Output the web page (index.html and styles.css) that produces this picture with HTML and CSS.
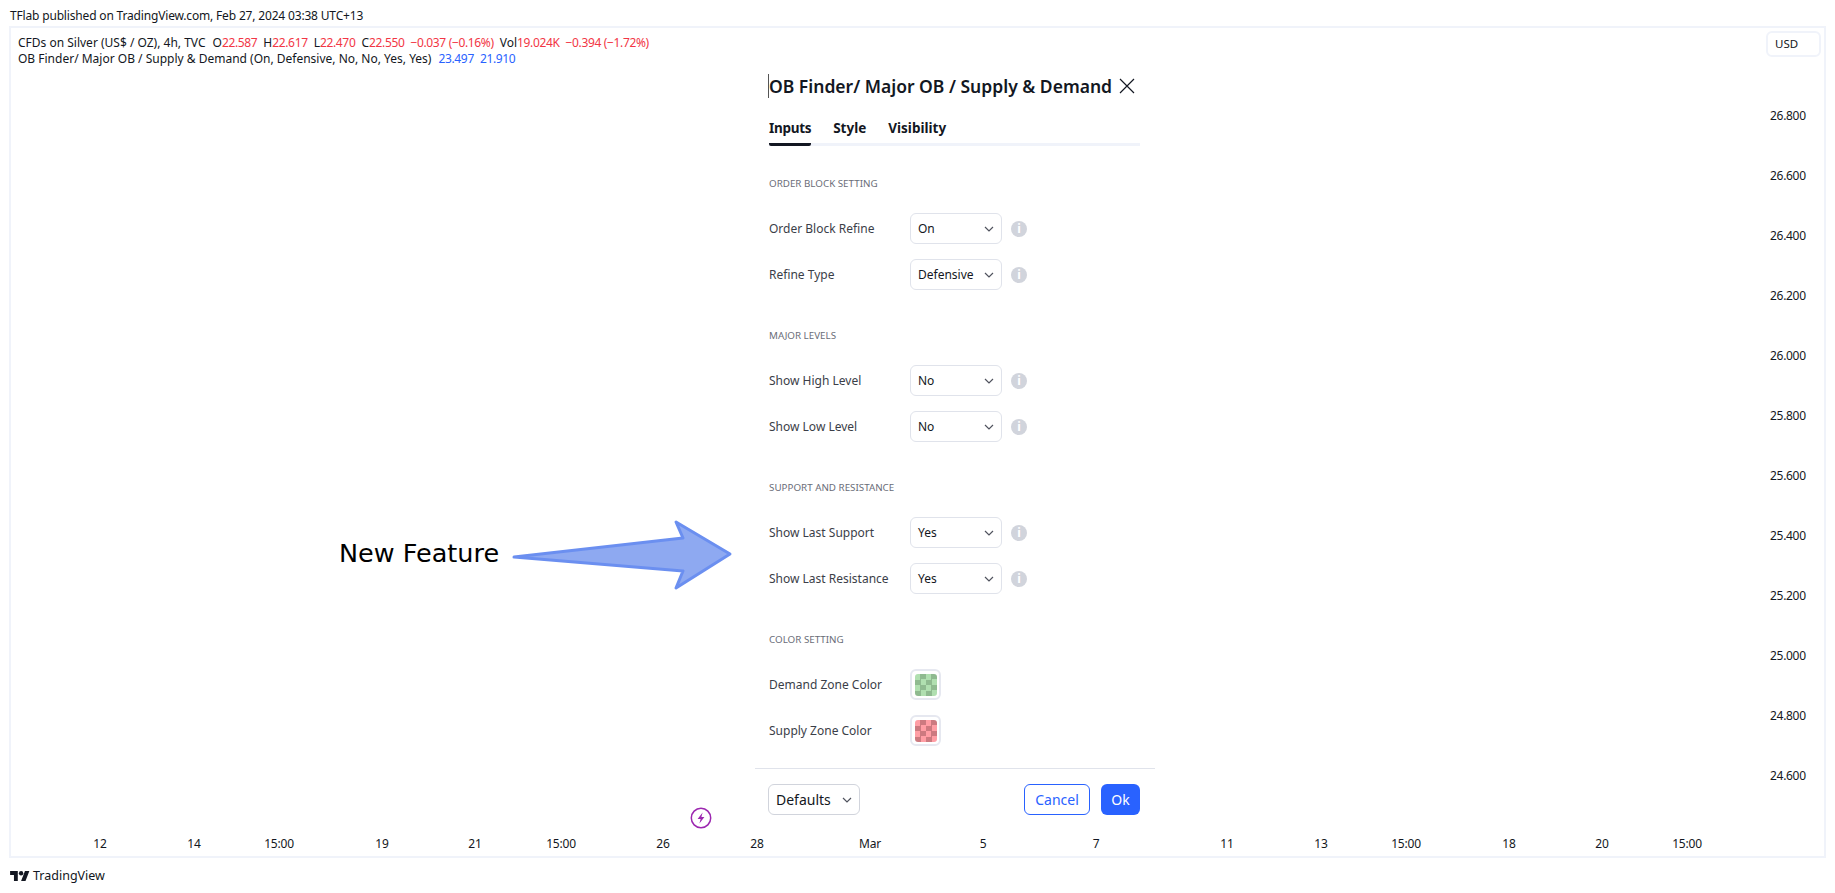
FILE: index.html
```html
<!DOCTYPE html>
<html lang="en">
<head>
    <meta charset="UTF-8">
    <title>OB Finder on TradingView</title>
    <link rel="stylesheet" href="styles.css">
</head>
<body>
    <div class="published">TFlab published on TradingView.com, Feb 27, 2024 03:38 UTC+13</div>

    <div class="chart">
        <div class="legend">
            <div class="legend-line">
                <span class="legend-name">CFDs on Silver (US$ / OZ), 4h, TVC</span>
                <span>O<b class="down">22.587</b></span>
                <span>H<b class="down">22.617</b></span>
                <span>L<b class="down">22.470</b></span>
                <span>C<b class="down">22.550</b></span>
                <span class="down">−0.037 (−0.16%)</span>
                <span>Vol<b class="down">19.024K</b></span>
                <span class="down">−0.394 (−1.72%)</span>
            </div>
            <div class="legend-line">
                <span class="legend-name">OB Finder/ Major OB / Supply &amp; Demand (On, Defensive, No, No, Yes, Yes)</span>
                <span class="blue">23.497</span>
                <span class="blue">21.910</span>
            </div>
        </div>

        <div class="price-axis">
            <div class="currency">USD</div>
            <div class="prices">
                <span>26.800</span>
                <span>26.600</span>
                <span>26.400</span>
                <span>26.200</span>
                <span>26.000</span>
                <span>25.800</span>
                <span>25.600</span>
                <span>25.400</span>
                <span>25.200</span>
                <span>25.000</span>
                <span>24.800</span>
                <span>24.600</span>
            </div>
        </div>

        <div class="time-axis">
            <span style="left: 91px">12</span>
            <span style="left: 185px">14</span>
            <span style="left: 270px">15:00</span>
            <span style="left: 373px">19</span>
            <span style="left: 466px">21</span>
            <span style="left: 552px">15:00</span>
            <span style="left: 654px">26</span>
            <span style="left: 748px">28</span>
            <span style="left: 861px">Mar</span>
            <span style="left: 974px">5</span>
            <span style="left: 1087px">7</span>
            <span style="left: 1218px">11</span>
            <span style="left: 1312px">13</span>
            <span style="left: 1397px">15:00</span>
            <span style="left: 1500px">18</span>
            <span style="left: 1593px">20</span>
            <span style="left: 1678px">15:00</span>
        </div>

        <svg class="flash" width="22" height="22" viewBox="0 0 22 22">
            <circle cx="11" cy="11" r="9.7" fill="#fff" stroke="#9c27b0" stroke-width="1.5"/>
            <path d="M12.6 5.5 7.6 12h3l-1.2 4.6 5-6.5h-3z" fill="#9c27b0"/>
        </svg>

        <div class="annotation">
            <span class="annotation-text">New Feature</span>
            <svg class="arrow" width="230" height="76" viewBox="0 0 230 76">
                <path d="M4 38 173 19 166 3 220 35 166 69 173 52z" fill="#8ea9f1" stroke="#6b8ff0" stroke-width="3" stroke-linejoin="round"/>
            </svg>
        </div>

        <div class="dialog">
            <div class="dialog-head">
                <h2 class="dialog-title">OB Finder/ Major OB / Supply &amp; Demand</h2>
                <svg class="close" width="16" height="16" viewBox="0 0 16 16">
                    <path d="M1 1l14 14M15 1 1 15" stroke="#131722" stroke-width="1.2" fill="none"/>
                </svg>
            </div>
            <div class="tabs">
                <span class="tab active">Inputs</span>
                <span class="tab">Style</span>
                <span class="tab">Visibility</span>
            </div>

            <div class="section">ORDER BLOCK SETTING</div>
            <div class="row">
                <span class="row-label">Order Block Refine</span>
                <div class="select"><span>On</span><svg class="chev" width="10" height="6" viewBox="0 0 10 6"><path d="M1 1l4 4 4-4" fill="none" stroke="#50535e" stroke-width="1.2"/></svg></div>
                <span class="info">i</span>
            </div>
            <div class="row">
                <span class="row-label">Refine Type</span>
                <div class="select"><span>Defensive</span><svg class="chev" width="10" height="6" viewBox="0 0 10 6"><path d="M1 1l4 4 4-4" fill="none" stroke="#50535e" stroke-width="1.2"/></svg></div>
                <span class="info">i</span>
            </div>

            <div class="section">MAJOR LEVELS</div>
            <div class="row">
                <span class="row-label">Show High Level</span>
                <div class="select"><span>No</span><svg class="chev" width="10" height="6" viewBox="0 0 10 6"><path d="M1 1l4 4 4-4" fill="none" stroke="#50535e" stroke-width="1.2"/></svg></div>
                <span class="info">i</span>
            </div>
            <div class="row">
                <span class="row-label">Show Low Level</span>
                <div class="select"><span>No</span><svg class="chev" width="10" height="6" viewBox="0 0 10 6"><path d="M1 1l4 4 4-4" fill="none" stroke="#50535e" stroke-width="1.2"/></svg></div>
                <span class="info">i</span>
            </div>

            <div class="section">SUPPORT AND RESISTANCE</div>
            <div class="row">
                <span class="row-label">Show Last Support</span>
                <div class="select"><span>Yes</span><svg class="chev" width="10" height="6" viewBox="0 0 10 6"><path d="M1 1l4 4 4-4" fill="none" stroke="#50535e" stroke-width="1.2"/></svg></div>
                <span class="info">i</span>
            </div>
            <div class="row">
                <span class="row-label">Show Last Resistance</span>
                <div class="select"><span>Yes</span><svg class="chev" width="10" height="6" viewBox="0 0 10 6"><path d="M1 1l4 4 4-4" fill="none" stroke="#50535e" stroke-width="1.2"/></svg></div>
                <span class="info">i</span>
            </div>

            <div class="section">COLOR SETTING</div>
            <div class="row">
                <span class="row-label">Demand Zone Color</span>
                <div class="swatch-box"><div class="swatch green"></div></div>
            </div>
            <div class="row">
                <span class="row-label">Supply Zone Color</span>
                <div class="swatch-box"><div class="swatch red"></div></div>
            </div>

            <div class="dialog-foot">
                <div class="select defaults"><span>Defaults</span><svg class="chev" width="10" height="6" viewBox="0 0 10 6"><path d="M1 1l4 4 4-4" fill="none" stroke="#50535e" stroke-width="1.2"/></svg></div>
                <div class="foot-buttons">
                    <button class="btn cancel">Cancel</button>
                    <button class="btn ok">Ok</button>
                </div>
            </div>
        </div>
    </div>

    <div class="brand">
        <svg width="20" height="11" viewBox="0 0 36 20">
            <path d="M14 20H7V9H0V2h14zM28 20h-8l7-18h8z" fill="#131722"/>
            <circle cx="20" cy="6" r="4" fill="#131722"/>
        </svg>
        <span>TradingView</span>
    </div>
</body>
</html>
```

FILE: styles.css
```css
body, html {
    margin: 0;
    padding: 0;
    height: 893px;
    overflow: hidden;
    background-color: white;
    color: #131722;
    font-family: 'Noto Sans', sans-serif;
    font-size: 12px;
}
.published {
    height: 26px;
    padding-left: 10px;
    line-height: 31px;
    font-size: 12px;
    letter-spacing: -0.17px;
}
.chart {
    position: relative;
    box-sizing: border-box;
    width: 1817px;
    height: 832px;
    margin-left: 9px;
    border: 2px solid #f0f3fa;
}

/* legend */
.legend {
    padding: 6px 0 0 7px;
}
.legend-line {
    display: flex;
    gap: 6px;
    height: 16px;
    line-height: 17px;
}
.legend-name {
    margin-right: 1px;
}
.legend b {
    font-weight: normal;
}
.down, .blue {
    letter-spacing: -0.35px;
}
.down {
    color: #f23645;
}
.blue {
    color: #2962ff;
}

/* axes */
.price-axis {
    position: absolute;
    top: 3px;
    right: 3px;
    width: 55px;
}
.currency {
    box-sizing: border-box;
    height: 26px;
    padding-left: 7px;
    line-height: 22px;
    border: 2px solid #f0f3fa;
    border-radius: 6px;
    font-size: 11.5px;
}
.prices {
    display: flex;
    flex-direction: column;
    margin-top: 49px;
    padding-left: 4px;
    letter-spacing: -0.3px;
}
.prices span {
    height: 60px;
    line-height: 20px;
}
.time-axis {
    position: absolute;
    left: -2px;
    right: 0;
    bottom: 2px;
    height: 20px;
    line-height: 20px;
    letter-spacing: -0.2px;
}
.time-axis span {
    position: absolute;
    transform: translateX(-50%);
}
.flash {
    position: absolute;
    left: 679px;
    top: 779px;
}

/* arrow and its label */
.annotation {
    position: absolute;
    left: 328px;
    top: 487px;
    display: flex;
    align-items: center;
    height: 76px;
}
.annotation-text {
    width: 171px;
    font-family: 'DejaVu Sans', sans-serif;
    font-size: 25.5px;
    color: black;
}
.arrow {
    margin-top: 8px;
}

/* settings dialog */
.dialog {
    position: absolute;
    left: 744px;
    top: 30px;
    box-sizing: border-box;
    width: 400px;
    padding: 0 15px 0 14px;
    background-color: white;
}
.dialog-head {
    display: flex;
    align-items: center;
    justify-content: space-between;
    height: 56px;
    padding-right: 5px;
}
.dialog-title {
    margin: 0 0 0 -1px;
    border-left: 1px solid #555;
    font-size: 17.5px;
    font-weight: 600;
    white-space: nowrap;
}
.tabs {
    display: flex;
    gap: 22px;
    height: 29px;
    border-bottom: 3px solid #f0f3fa;
}
.tab {
    font-size: 13.5px;
    font-weight: 700;
    line-height: 28px;
}
.tab.active {
    height: 29px;
    border-bottom: 3px solid #131722;
    border-radius: 0 0 2px 2px;
    letter-spacing: -0.3px;
}
.section {
    margin-top: 30px;
    height: 37px;
    color: #6a6d78;
    font-size: 9.8px;
    line-height: 15px;
}
/* rows keep a 15px bottom margin, it collapses into this one */
.row + .section {
    margin-top: 38px;
}
.row {
    display: flex;
    align-items: center;
    height: 31px;
    margin-bottom: 15px;
    color: #3b3e48;
}
.row-label {
    width: 141px;
    flex-shrink: 0;
}
.select {
    display: flex;
    align-items: center;
    justify-content: space-between;
    box-sizing: border-box;
    width: 92px;
    height: 31px;
    padding: 0 7px;
    border: 1px solid #e0e3eb;
    border-radius: 6px;
    color: #131722;
}
.info {
    width: 16px;
    height: 16px;
    margin-left: 9px;
    border-radius: 50%;
    background-color: #d1d4dc;
    color: white;
    font-weight: 700;
    font-size: 12px;
    line-height: 16px;
    text-align: center;
}
.swatch-box {
    box-sizing: border-box;
    width: 31px;
    height: 31px;
    padding: 2.5px;
    border: 2px solid #e6e8f0;
    border-radius: 6px;
}
.swatch {
    width: 22px;
    height: 22px;
    border-radius: 3px;
    background-size: 11px 11px;
}
.swatch.green {
    background-image: repeating-conic-gradient(#8fba90 0 25%, #b0dfb0 0 50%);
}
.swatch.red {
    background-image: repeating-conic-gradient(#cc7a80 0 25%, #ff9ea5 0 50%);
}
.dialog-foot {
    display: flex;
    align-items: center;
    justify-content: space-between;
    height: 61px;
    margin: 22px -15px 0 -14px;
    padding: 0 15px 1px 13px;
    border-top: 1px solid #e0e3eb;
}
.defaults {
    font-size: 14px;
    border-color: #d1d4dc;
}
.foot-buttons {
    display: flex;
    gap: 11px;
}
.btn {
    height: 31px;
    padding: 0;
    border-radius: 6px;
    font-family: inherit;
    font-size: 14px;
}
.cancel {
    width: 66px;
    background-color: white;
    color: #2962ff;
    border: 1px solid #2962ff;
}
.ok {
    width: 39px;
    background-color: #2962ff;
    color: white;
    border: none;
}
.brand {
    display: flex;
    align-items: center;
    gap: 3px;
    height: 34px;
    padding-left: 10px;
    font-size: 12.5px;
}
```
